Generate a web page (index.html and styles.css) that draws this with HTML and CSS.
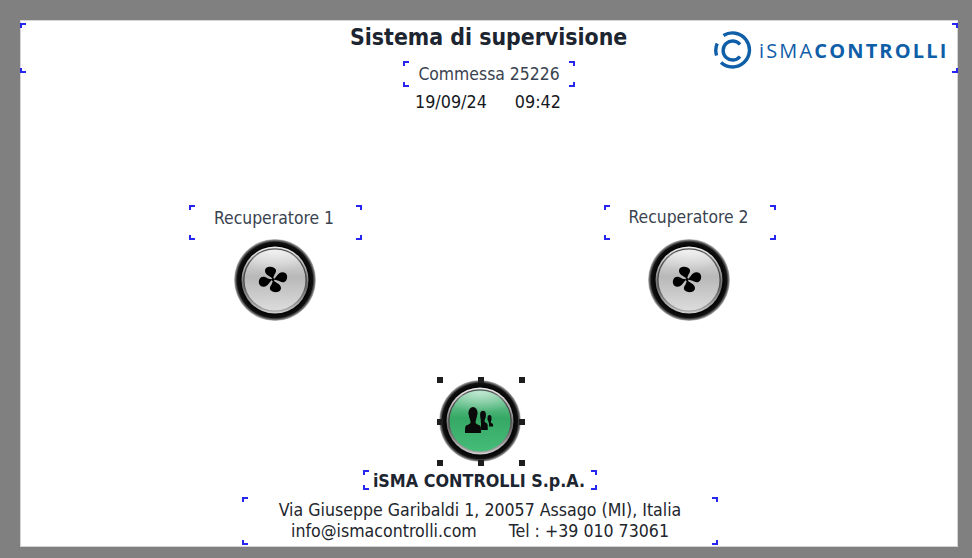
FILE: index.html
```html
<!DOCTYPE html>
<html lang="it">
<head>
<meta charset="utf-8">
<title>Sistema di supervisione</title>
<link rel="stylesheet" href="styles.css">
</head>
<body>
<svg class="defs" width="0" height="0" aria-hidden="true">
  <defs>
    <radialGradient id="outer" cx="50%" cy="50%" r="50%">
      <stop offset="0.8" stop-color="#000"/>
      <stop offset="0.92" stop-color="#111"/>
      <stop offset="0.97" stop-color="#777"/>
      <stop offset="1" stop-color="#d0d0d0"/>
    </radialGradient>
    <linearGradient id="rim" x1="0" y1="0" x2="0" y2="1">
      <stop offset="0" stop-color="#f0f0f0"/>
      <stop offset="0.25" stop-color="#bbb"/>
      <stop offset="0.6" stop-color="#6a6a6a"/>
      <stop offset="1" stop-color="#cfcfcf"/>
    </linearGradient>
    <linearGradient id="rim-in" x1="0" y1="0" x2="0" y2="1">
      <stop offset="0" stop-color="#555"/>
      <stop offset="0.5" stop-color="#444"/>
      <stop offset="1" stop-color="#aaa"/>
    </linearGradient>
    <linearGradient id="grey" x1="0" y1="0" x2="0" y2="1">
      <stop offset="0" stop-color="#e4e4e4"/>
      <stop offset="0.45" stop-color="#b8b8b8"/>
      <stop offset="1" stop-color="#dcdcdc"/>
    </linearGradient>
    <linearGradient id="green" x1="0" y1="0" x2="0" y2="1">
      <stop offset="0" stop-color="#88d3a8"/>
      <stop offset="0.45" stop-color="#36a866"/>
      <stop offset="1" stop-color="#45bc78"/>
    </linearGradient>
    <radialGradient id="shine" cx="50%" cy="0%" r="75%">
      <stop offset="0" stop-color="#fff" stop-opacity="0.5"/>
      <stop offset="1" stop-color="#fff" stop-opacity="0"/>
    </radialGradient>
    <path id="blade" d="M0 0C-1 -3 -8 -4 -8 -8.500C-8 -12.500 -3 -13.500 .5 -12C4 -10.500 3.500 -7.500 1.500 -5C.8 -3.500 .3 -2 0 0Z"/>
    <g id="fan" transform="translate(39 40.500)">
      <use href="#blade"/>
      <use href="#blade" transform="rotate(90) scale(.9 1.12)"/>
      <use href="#blade" transform="rotate(180)"/>
      <use href="#blade" transform="rotate(270) scale(.9 1.12)"/>
      <circle r="1.500"/>
    </g>
    <g id="bezel">
      <circle cx="41" cy="41" r="41" fill="url(#outer)"/>
      <circle cx="41" cy="41" r="33.500" fill="url(#rim)"/>
      <circle cx="41" cy="41" r="31.800" fill="url(#rim-in)"/>
    </g>
  </defs>
</svg>
<main class="canvas">
  <section class="mark header-frame"></section>
  <h1 class="title">Sistema di supervisione</h1>
  <div class="logo">
    <svg class="logo-mark" viewBox="0 0 38 38" width="38" height="38">
      <g fill="none" stroke="#0f5ea8" stroke-width="3.400">
        <path d="M9.500 4.500A17 17 0 1 1 7 31.500"/>
        <path d="M2.600 24.500A17 17 0 0 1 3.200 12.500"/>
        <path d="M26 13.500A9.500 9.500 0 1 0 26 25.500"/>
      </g>
    </svg>
    <span class="logo-text"><span class="logo-light">iSMA</span><b class="logo-bold">CONTROLLI</b></span>
  </div>
  <div class="mark label commessa">Commessa 25226</div>
  <div class="datetime"><span>19/09/24</span><span>09:42</span></div>

  <div class="mark label rec1">Recuperatore 1</div>
  <svg class="button btn1" viewBox="0 0 82 82" width="82" height="82">
    <use href="#bezel"/>
    <circle cx="41" cy="41" r="30.500" fill="url(#grey)"/>
    <ellipse cx="41" cy="26" rx="26" ry="15" fill="url(#shine)"/>
    <use href="#fan"/>
  </svg>

  <div class="mark label rec2">Recuperatore 2</div>
  <svg class="button btn2" viewBox="0 0 82 82" width="82" height="82">
    <use href="#bezel"/>
    <circle cx="41" cy="41" r="30.500" fill="url(#grey)"/>
    <ellipse cx="41" cy="26" rx="26" ry="15" fill="url(#shine)"/>
    <use href="#fan"/>
  </svg>

  <svg class="button btn3" viewBox="0 0 82 82" width="82" height="82">
    <use href="#bezel"/>
    <circle cx="41" cy="41" r="30.500" fill="url(#green)"/>
    <ellipse cx="41" cy="26" rx="26" ry="15" fill="url(#shine)"/>
    <g fill="#0a0a0a">
      <ellipse cx="50.500" cy="38" rx="2" ry="3"/>
      <path d="M48.500 39h4l-.7 3c0 1 1.300 1.300 1.900 1.800.4.400.5 1.200.5 2.700H50v-3z"/>
      <ellipse cx="44" cy="35" rx="2.900" ry="4.200"/>
      <path d="M41.500 37h5l-1 4c0 1.500 1.800 1.800 2.600 2.500.6.500.7 2.500.7 6.500H42v-6z"/>
      <ellipse cx="34" cy="33" rx="4.600" ry="6"/>
      <path d="M30 36h8l-1.500 6c0 2 2 2.500 4 3.200 1.500.6 1.600 3 1.600 7.800H26c0-4.800.1-7.200 1.600-7.800 2-.7 4-1.200 4-3.200z"/>
    </g>
  </svg>
  <span class="handle h1"></span><span class="handle h2"></span><span class="handle h3"></span>
  <span class="handle h4"></span><span class="handle h5"></span>
  <span class="handle h6"></span><span class="handle h7"></span><span class="handle h8"></span>

  <div class="mark label company">iSMA CONTROLLI S.p.A.</div>
  <div class="mark address">
    <div>Via Giuseppe Garibaldi 1, 20057 Assago (MI), Italia</div>
    <div class="contacts"><span>info@ismacontrolli.com</span><span>Tel : +39 010 73061</span></div>
  </div>
</main>
</body>
</html>
```

FILE: styles.css
```css
* { box-sizing: border-box; }
html, body { margin: 0; height: 100%; }
body {
  background: #808080;
  padding: 20px 14px 11px 20px;
  overflow: hidden;
  font-family: "DejaVu Sans Condensed", "DejaVu Sans", sans-serif;
  color: #1c2530;
}
.defs { position: absolute; }
.canvas {
  position: relative;
  width: 938px;
  height: 527px;
  background: #fff;
  box-shadow: inset 0 0 0 1px #d4d4d4;
}
.canvas > * { position: absolute; }

.mark {
  --c: #2626ee;
  background:
    linear-gradient(var(--c), var(--c)) 0 0 / 6px 2px,
    linear-gradient(var(--c), var(--c)) 0 0 / 2px 5px,
    linear-gradient(var(--c), var(--c)) 100% 0 / 6px 2px,
    linear-gradient(var(--c), var(--c)) 100% 0 / 2px 5px,
    linear-gradient(var(--c), var(--c)) 0 100% / 6px 2px,
    linear-gradient(var(--c), var(--c)) 0 100% / 2px 5px,
    linear-gradient(var(--c), var(--c)) 100% 100% / 6px 2px,
    linear-gradient(var(--c), var(--c)) 100% 100% / 2px 5px;
  background-repeat: no-repeat;
}
.header-frame { left: 0; top: 3px; width: 938px; height: 50px; }

.title {
  left: 330px; top: 3px;
  margin: 0;
  font-size: 22.85px;
  line-height: 29px;
  font-weight: 700;
  white-space: nowrap;
}

.logo { left: 694px; top: 11px; display: flex; align-items: center; gap: 7px; }
.logo-mark { display: block; }
.logo-text {
  font-family: "Open Sans", sans-serif;
  font-size: 20px;
  letter-spacing: 2.15px;
  color: #0f5ea8;
  white-space: nowrap;
}
.logo-light { font-weight: 400; }
.logo-bold { font-weight: 700; }

.label {
  display: flex; align-items: center; justify-content: center;
  font-size: 17.4px;
  color: #3a4350;
  white-space: nowrap;
}
.commessa { left: 383px; top: 41px; width: 172px; height: 26px; }
.datetime {
  left: 395px; top: 71px;
  display: flex; gap: 28px;
  font-size: 17.8px; line-height: 22px;
  color: #15181d;
}
.rec1 { left: 169px; top: 185px; width: 173px; height: 35px; padding: 0 3px 10px 0; }
.rec2 { left: 584px; top: 185px; width: 172px; height: 35px; padding: 0 3px 12px 0; }

.button { display: block; }
.btn1 { left: 214px; top: 219px; }
.btn2 { left: 628px; top: 219px; }
.btn3 { left: 419px; top: 360px; }

.handle { width: 6px; height: 6px; background: #1d1d1d; }
.h1 { left: 417px; top: 357px; }
.h2 { left: 458px; top: 357px; }
.h3 { left: 499px; top: 357px; }
.h4 { left: 417px; top: 399px; }
.h5 { left: 499px; top: 399px; }
.h6 { left: 417px; top: 440px; }
.h7 { left: 458px; top: 440px; }
.h8 { left: 499px; top: 440px; }

.company { left: 343px; top: 450px; width: 234px; height: 20px; padding-right: 2px; font-weight: 700; font-size: 17.8px; color: #1c2530; }
.address {
  left: 222px; top: 477px; width: 476px; height: 48px;
  display: flex; flex-direction: column; align-items: center; justify-content: center;
  font-size: 17.6px; line-height: 21px; color: #22262c;
  white-space: nowrap;
}
.contacts { display: flex; gap: 32px; }
```
